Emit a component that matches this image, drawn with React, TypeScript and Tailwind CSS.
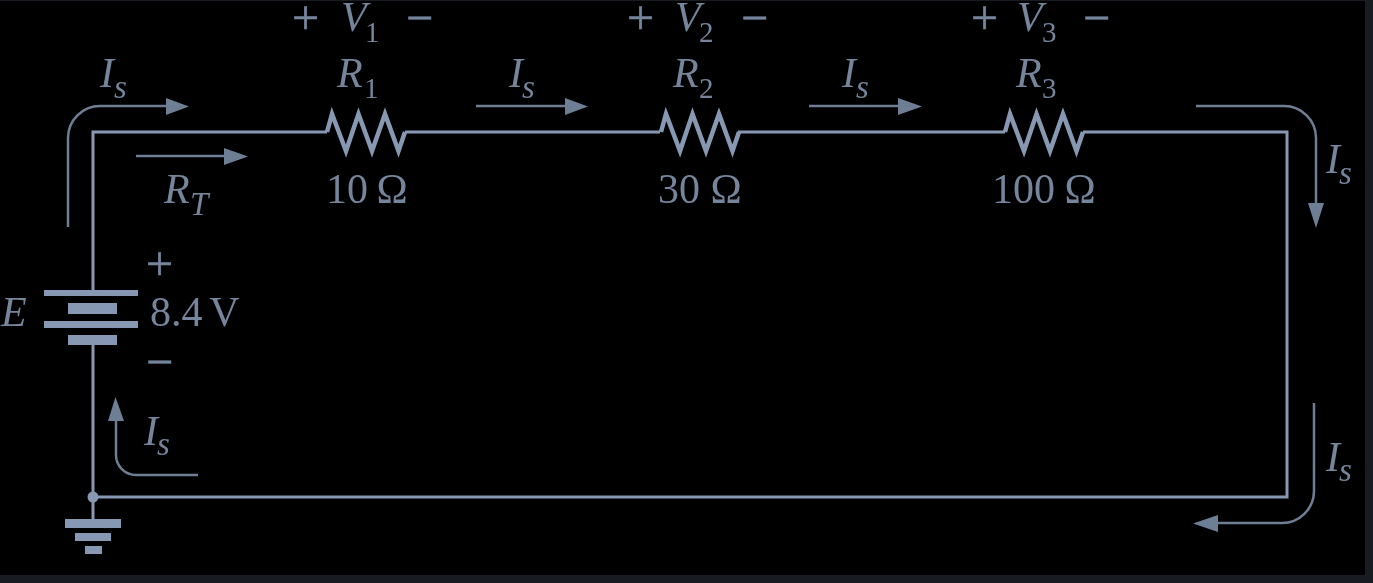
import React from "react";

const WIRE = "#8798b3";
const ARROW = "#6e7e95";
const INK = "#75859c";

type LabelProps = {
  x: number;
  y: number;
  text: string;
  sub?: string;
  subX?: number;
  subY?: number;
  subItalic?: boolean;
};

// italic symbol with a small subscript next to it
function Symbol({ x, y, text, sub, subX, subY, subItalic }: LabelProps) {
  return (
    <>
      <text x={x} y={y} fontSize={42} fontStyle="italic" fill={INK}>
        {text}
      </text>
      {sub && (
        <text x={subX} y={subY} fontSize={subItalic ? 33 : 29} fontStyle={subItalic ? "italic" : "normal"} fill={INK}>
          {sub}
        </text>
      )}
    </>
  );
}

function Value({ x, y, text, gap }: { x: number; y: number; text: string; gap: number }) {
  return (
    <text x={x} y={y} fontSize={42} wordSpacing={gap} fill={INK}>
      {text}
    </text>
  );
}

// plus and minus marks are a bit bigger than the label text
function Sign({ x, y, text }: { x: number; y: number; text: string }) {
  return (
    <text x={x} y={y} fontSize={48} fill={INK} stroke={INK} strokeWidth={0.6}>
      {text}
    </text>
  );
}

function Resistor({ dx }: { dx: number }) {
  return (
    <polyline
      points={`${dx + 327},132 ${dx + 332},114 ${dx + 346},151 ${dx + 358.5},114 ${dx + 372},151 ${dx + 385},114 ${dx + 398.5},151 ${dx + 405},132`}
      fill="none"
      stroke={WIRE}
      strokeWidth={4.5}
      strokeLinejoin="miter"
    />
  );
}

function Arrow({ d, head }: { d: string; head: string }) {
  return (
    <>
      <path d={d} fill="none" stroke={ARROW} strokeWidth={2.5} />
      <polygon points={head} fill={ARROW} />
    </>
  );
}

const meters = [
  { plus: 292, v: 341, sub: "1", subX: 365, minus: 406, r: 337, rSub: 364, ohm: "10 Ω", ohmX: 326, gap: -2 },
  { plus: 627, v: 675, sub: "2", subX: 699, minus: 741, r: 673, rSub: 699, ohm: "30 Ω", ohmX: 658, gap: 0 },
  { plus: 971, v: 1017, sub: "3", subX: 1042, minus: 1083, r: 1016, rSub: 1042, ohm: "100 Ω", ohmX: 992, gap: -1 },
];

export default function App() {
  return (
    <div className="h-[583px] w-full overflow-hidden bg-[#181c22] pt-px">
      <div className="h-[574px] w-[1365px] bg-black">
        <svg
          viewBox="0 1 1365 574"
          className="block h-[574px] w-[1365px] blur-[0.6px]"
          style={{ fontFamily: '"Liberation Serif", serif' }}
        >
          {/* main loop */}
          <path
            d="M93 290V132H327M405 132H660M738 132H1005M1083 132H1287V497H93M93 345V520"
            fill="none"
            stroke={WIRE}
            strokeWidth={3}
          />
          <Resistor dx={0} />
          <Resistor dx={334} />
          <Resistor dx={678} />
          <circle cx={93} cy={497} r={5.5} fill={WIRE} />

          {/* battery */}
          <g fill={WIRE}>
            <rect x={44} y={290} width={94} height={6} />
            <rect x={68} y={303} width={49} height={11} />
            <rect x={44} y={321} width={94} height={7} />
            <rect x={68} y={335} width={49} height={10} />
          </g>

          {/* ground */}
          <g fill={WIRE}>
            <rect x={65} y={519} width={56} height={9} />
            <rect x={75} y={533} width={36} height={8} />
            <rect x={85} y={546} width={17} height={8} />
          </g>

          {/* current arrows */}
          <Arrow d="M68 227V138A32 32 0 0 1 100 106H170" head="166,98 189,106.5 166,115" />
          <Arrow d="M136 156H226" head="224,148 248,156.5 224,165" />
          <Arrow d="M476 106H568" head="565,98 588,106.5 565,115" />
          <Arrow d="M809 106H900" head="898,98 922,106.5 898,115" />
          <Arrow d="M1196 106H1284A32 32 0 0 1 1316 138V206" head="1308,203 1316,228 1324,203" />
          <Arrow d="M198 475H136A20 20 0 0 1 116 455V418" head="108,421 115.5,397 124,421" />
          <Arrow d="M1314 403V491A32 32 0 0 1 1282 523H1216" head="1218,515 1193,523.5 1218,532" />

          {/* labels */}
          {meters.map((m) => (
            <React.Fragment key={m.sub}>
              <Sign x={m.plus} y={34} text="+" />
              <Sign x={m.minus} y={34} text="−" />
              <Symbol x={m.v} y={31} text="V" sub={m.sub} subX={m.subX} subY={42} />
              <Symbol x={m.r} y={87} text="R" sub={m.sub} subX={m.rSub} subY={98} />
              <Value x={m.ohmX} y={203} text={m.ohm} gap={m.gap} />
            </React.Fragment>
          ))}
          <Symbol x={100} y={87} text="I" sub="s" subX={114} subY={98} subItalic />
          <Symbol x={509} y={87} text="I" sub="s" subX={522} subY={98} subItalic />
          <Symbol x={842} y={87} text="I" sub="s" subX={856} subY={98} subItalic />
          <Symbol x={1326} y={173} text="I" sub="s" subX={1339} subY={184} subItalic />
          <Symbol x={1326} y={471} text="I" sub="s" subX={1339} subY={481} subItalic />
          <Symbol x={144} y={445} text="I" sub="s" subX={157} subY={455} subItalic />
          <Symbol x={164} y={203} text="R" sub="T" subX={190} subY={215} subItalic />
          <Symbol x={1} y={326} text="E" />
          <Value x={150} y={326} text="8.4 V" gap={-3} />
          <Sign x={146} y={280} text="+" />
          <Sign x={146} y={378} text="−" />
        </svg>
      </div>
    </div>
  );
}
